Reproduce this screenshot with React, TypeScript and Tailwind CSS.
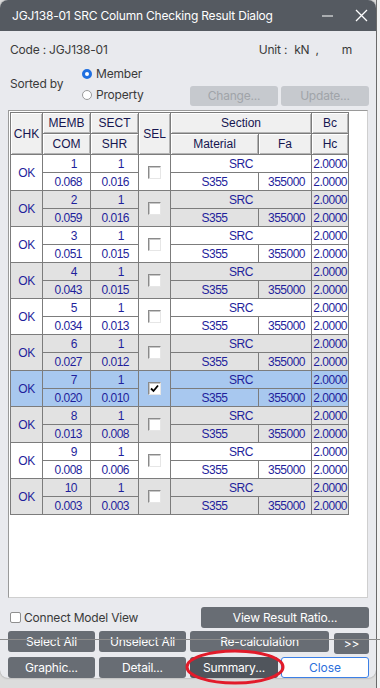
import React from 'react';

type Row = { memb: string; sect: string; com: string; shr: string };

const rows: Row[] = [
  { memb: '1', sect: '1', com: '0.068', shr: '0.016' },
  { memb: '2', sect: '1', com: '0.059', shr: '0.016' },
  { memb: '3', sect: '1', com: '0.051', shr: '0.015' },
  { memb: '4', sect: '1', com: '0.043', shr: '0.015' },
  { memb: '5', sect: '1', com: '0.034', shr: '0.013' },
  { memb: '6', sect: '1', com: '0.027', shr: '0.012' },
  { memb: '7', sect: '1', com: '0.020', shr: '0.010' },
  { memb: '8', sect: '1', com: '0.013', shr: '0.008' },
  { memb: '9', sect: '1', com: '0.008', shr: '0.006' },
  { memb: '10', sect: '1', com: '0.003', shr: '0.003' },
];

const SELECTED = 6;

const th =
  'border border-[#7c7c7c] bg-[#f0f0f0] shadow-[inset_1px_1px_0_#ffffff,inset_-1px_-1px_0_#b4b4b4] font-normal text-[12px] text-[#161650] text-center p-0';
const td = 'border border-[#7c7c7c] p-0 text-[12px] tracking-[-0.5px] text-[#1f1f9c] leading-none';

function Btn({ children, className = '' }: { children: React.ReactNode; className?: string }) {
  return (
    <button
      className={`h-[21px] rounded-[3px] bg-[#686d74] text-white text-[12px] tracking-[-0.2px] leading-none flex items-center justify-center ${className}`}
    >
      {children}
    </button>
  );
}

function CheckCell({ checked }: { checked: boolean }) {
  return (
    <div className="mx-auto w-[13px] h-[13px] bg-white border border-[#8a8a8a] border-r-[#e6e6e6] border-b-[#e6e6e6] shadow-[inset_1px_1px_0_#c8c8c8] flex items-center justify-center">
      {checked && (
        <svg width="9" height="9" viewBox="0 0 9 9">
          <path d="M1 4.5 L3.5 7 L8 1.5" stroke="#000" strokeWidth="1.8" fill="none" />
        </svg>
      )}
    </div>
  );
}

export default function App() {
  return (
    <div
      className="relative w-[380px] h-[688px] bg-[#dcdcdc] overflow-hidden flex"
      style={{ fontFamily: 'Inter, "Noto Sans", sans-serif' }}
    >
      <div className="w-[376px] h-[678px] rounded-[8px] bg-[#e9eaee] flex flex-col overflow-hidden shadow-[0_0_2px_#888]">
        {/* title bar */}
        <div className="h-[31px] bg-[#555a61] flex items-center pl-[12px] pr-[8px] text-white">
          <span className="text-[12px] tracking-[-0.2px]">JGJ138-01 SRC Column Checking Result Dialog</span>
          <div className="ml-auto flex items-center gap-[22px]">
            <svg width="11" height="11" viewBox="0 0 11 11">
              <path d="M0 6 H11" stroke="#fff" strokeWidth="1.2" />
            </svg>
            <svg width="13" height="13" viewBox="0 0 13 13">
              <path d="M1 1 L12 12 M12 1 L1 12" stroke="#fff" strokeWidth="1.3" />
            </svg>
          </div>
        </div>

        {/* code / unit */}
        <div className="mt-[12px] h-[14px] pl-[10px] flex items-center text-[12px] tracking-[-0.2px] text-[#3a3a3a]">
          <span>Code : JGJ138-01</span>
          <span className="ml-auto">Unit :</span>
          <span className="ml-[7px]">kN</span>
          <span className="ml-[6px]">,</span>
          <span className="ml-[23px] mr-[24px]">m</span>
        </div>

        {/* sorted by */}
        <div className="mt-[6px] flex pl-[10px] pr-[7px] text-[12px] tracking-[-0.2px] text-[#3a3a3a]">
          <div className="h-[42px] w-[72px] flex items-center">Sorted by</div>
          <div className="flex flex-col">
            <div className="h-[21px] flex items-center gap-[4px]">
              <span className="w-[10px] h-[10px] rounded-full border-[3px] border-[#1f6fe0] bg-white" />
              <span>Member</span>
            </div>
            <div className="h-[21px] flex items-center gap-[4px]">
              <span className="w-[10px] h-[10px] rounded-full border border-[#9a9a9a] bg-white" />
              <span>Property</span>
            </div>
          </div>
          <div className="ml-auto self-end flex gap-[3px] mb-[-1px]">
            <button className="w-[88px] h-[20px] rounded-[3px] bg-[#c6c9ce] text-[#a0a4a9] text-[12px]">Change...</button>
            <button className="w-[88px] h-[20px] rounded-[3px] bg-[#c6c9ce] text-[#a0a4a9] text-[12px]">Update...</button>
          </div>
        </div>

        {/* table panel */}
        <div className="mt-[5px] ml-[8px] w-[360px] h-[488px] bg-white border border-[#cfcfcf] border-l-[#9a9a9a] border-t-[#9a9a9a] pt-[1px] pl-[1px]">
          <table
            className="border-collapse table-fixed"
            style={{ fontFamily: '"Liberation Sans", Arial, sans-serif' }}
          >
            <colgroup>
              <col className="w-[32px]" />
              <col className="w-[48px]" />
              <col className="w-[48px]" />
              <col className="w-[32px]" />
              <col className="w-[88px]" />
              <col className="w-[53px]" />
              <col className="w-[37px]" />
            </colgroup>
            <thead>
              <tr className="h-[21px]">
                <th rowSpan={2} className={th}>CHK</th>
                <th className={th}>MEMB</th>
                <th className={th}>SECT</th>
                <th rowSpan={2} className={th}>SEL</th>
                <th colSpan={2} className={th}>Section</th>
                <th className={th}>Bc</th>
              </tr>
              <tr className="h-[21px]">
                <th className={th}>COM</th>
                <th className={th}>SHR</th>
                <th className={th}>Material</th>
                <th className={th}>Fa</th>
                <th className={th}>Hc</th>
              </tr>
            </thead>
            <tbody>
              {rows.map((r, i) => {
                const bg = i === SELECTED ? 'bg-[#a8c8ef]' : i % 2 === 1 ? 'bg-[#e2e2e2]' : 'bg-white';
                return (
                  <React.Fragment key={r.memb}>
                    <tr className={`h-[18px] ${bg}`}>
                      <td rowSpan={2} className={`${td} text-center`}>OK</td>
                      <td className={`${td} text-right pr-[13px]`}>{r.memb}</td>
                      <td className={`${td} text-right pr-[14px]`}>{r.sect}</td>
                      <td rowSpan={2} className={`${td} text-center`}>
                        <CheckCell checked={i === SELECTED} />
                      </td>
                      <td colSpan={2} className={`${td} text-center`}>SRC</td>
                      <td className={`${td} text-right pr-[1px]`}>2.0000</td>
                    </tr>
                    <tr className={`h-[18px] ${bg}`}>
                      <td className={`${td} text-right pr-[8px]`}>{r.com}</td>
                      <td className={`${td} text-right pr-[9px]`}>{r.shr}</td>
                      <td className={`${td} text-center`}>S355</td>
                      <td className={`${td} text-right pr-[6px]`}>355000</td>
                      <td className={`${td} text-right pr-[1px]`}>2.0000</td>
                    </tr>
                  </React.Fragment>
                );
              })}
            </tbody>
          </table>
        </div>

        {/* bottom controls */}
        <div className="mt-[9px] h-[21px] flex items-center pl-[10px] pr-[7px]">
          <span className="w-[11px] h-[11px] rounded-[2px] border border-[#8f8f8f] bg-white" />
          <span className="ml-[3px] text-[12px] tracking-[-0.2px] text-[#3a3a3a]">Connect Model View</span>
          <Btn className="ml-auto w-[168px]">View Result Ratio...</Btn>
        </div>
        <div className="mt-[3px] flex pl-[8px] gap-[4px]">
          <Btn className="w-[87px]">Select All</Btn>
          <Btn className="w-[87px]">Unselect All</Btn>
          <Btn className="w-[139px]">Re-calculation</Btn>
          <Btn className="w-[35px] mt-[2px] ml-[1px]">&gt;&gt;</Btn>
        </div>
        <div className="mt-[3px] flex pl-[8px] gap-[4px]">
          <Btn className="w-[87px]">Graphic...</Btn>
          <Btn className="w-[87px]">Detail...</Btn>
          <Btn className="w-[88px] bg-[#50555c]">Summary...</Btn>
          <button className="w-[88px] h-[21px] ml-[-1px] rounded-[3px] bg-white border border-[#3c80e6] text-[#2c6fdc] text-[12px] leading-none">
            Close
          </button>
        </div>
      </div>
      <div className="flex-1 bg-[#f2f2f2] border-l border-[#6a6a6a]" />

      {/* stray line across the buttons */}
      <div className="absolute left-0 right-0 top-[639px] h-px bg-[#8c8c8c]" />
      {/* red annotation ellipse */}
      <svg className="absolute left-[184px] top-[648px]" width="102" height="40" viewBox="0 0 102 40">
        <ellipse cx="51" cy="19" rx="48" ry="16" stroke="#e21b2a" strokeWidth="3" fill="none" />
      </svg>
    </div>
  );
}
